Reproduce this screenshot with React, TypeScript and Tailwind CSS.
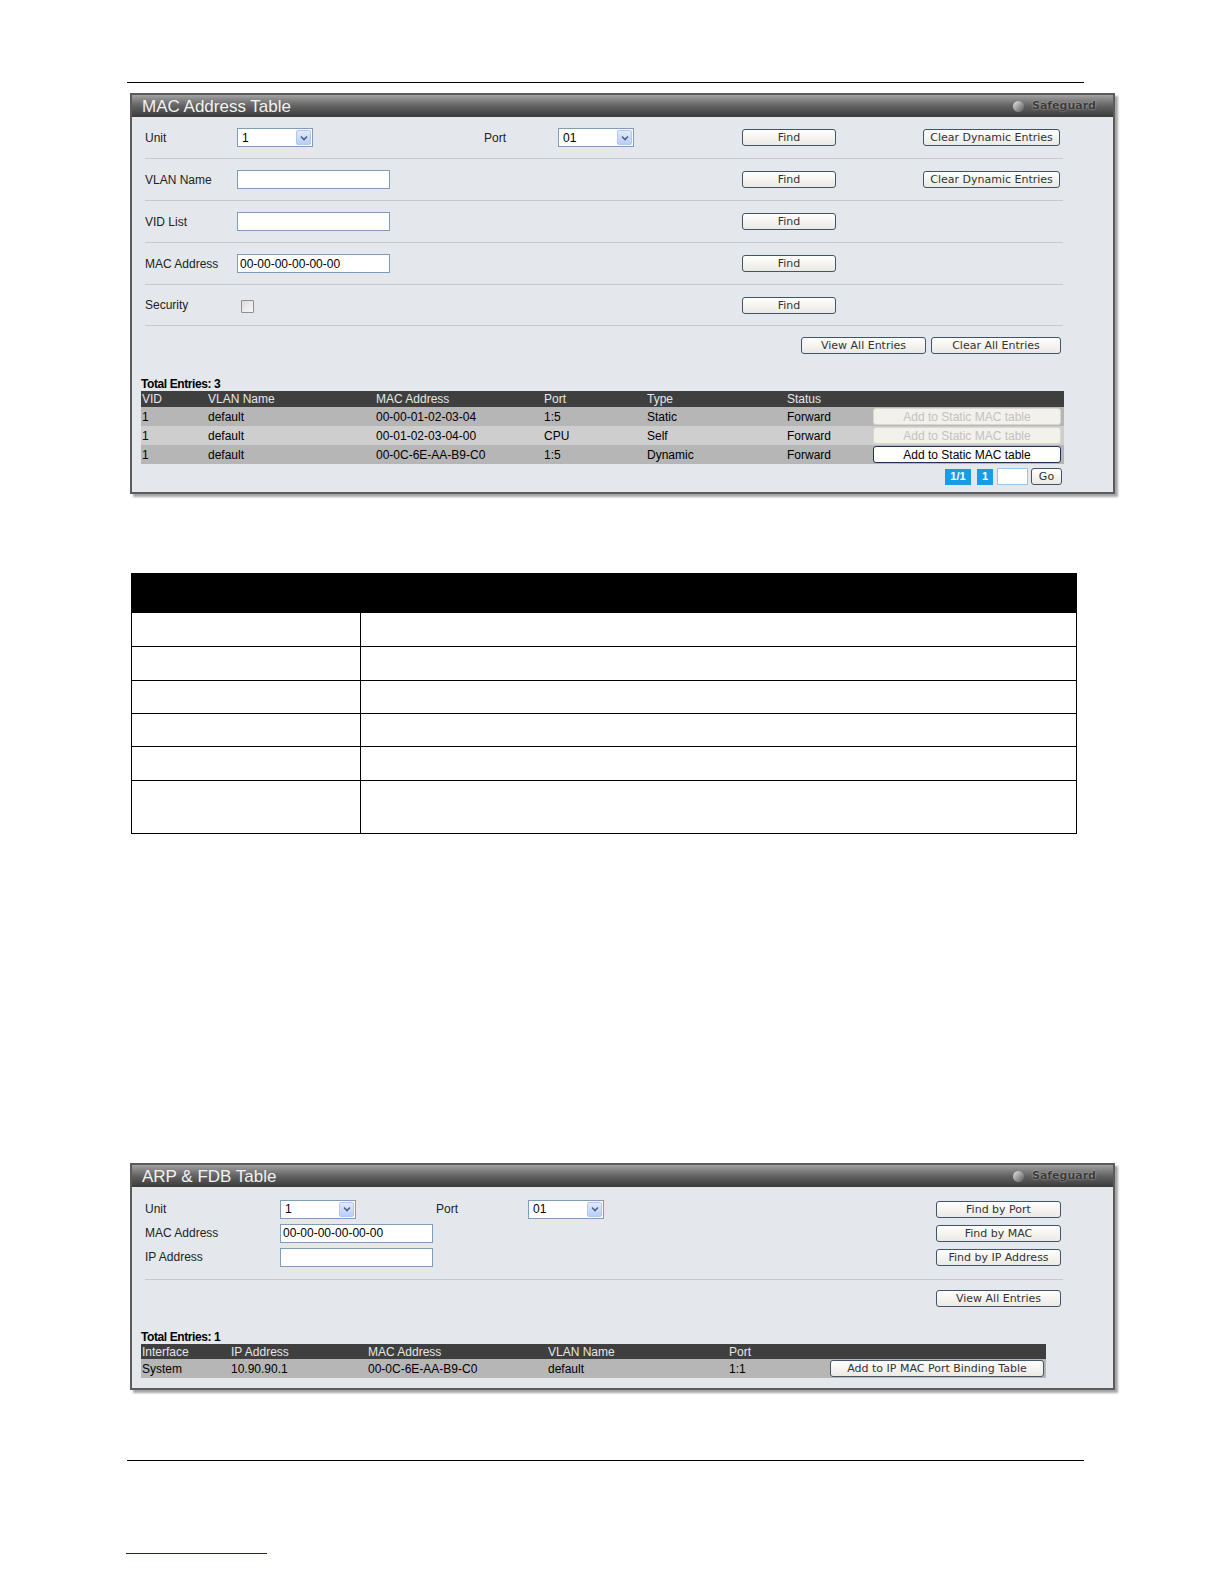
import { ReactNode } from 'react'

const arial = "font-['Liberation_Sans',Arial,sans-serif]"
const verdana = "font-['DejaVu_Sans',Verdana,sans-serif]"

function TitleBar({ title }: { title: string }) {
  return (
    <div className="flex h-[22px] items-center justify-between bg-gradient-to-b from-[#a2a2a2] via-[#626262] to-[#3b3b3b] pl-[10px] pr-[17px]">
      <span className={`${arial} text-[17px] leading-none text-[#f2f2f2]`}>{title}</span>
      <span className="flex items-center gap-[8px]">
        <span className="h-[11px] w-[11px] rounded-full bg-gradient-to-br from-[#e8e8e8] to-[#5a5a5a]" />
        <span className={`${verdana} text-[11px] font-bold text-[#3a3a3a] [text-shadow:0_0_2px_#c8c8c8]`}>Safeguard</span>
      </span>
    </div>
  )
}

function Btn({ children, w, disabled, plain }: { children: ReactNode; w: string; disabled?: boolean; plain?: boolean }) {
  const base = `flex h-[17px] items-center justify-center rounded-[3px] border leading-none ${w}`
  if (disabled)
    return <div className={`${base} ${arial} border-[#d9d7d0] bg-[#f3f1ec] text-[12px] text-[#c2c2c2]`}>{children}</div>
  if (plain)
    return <div className={`${base} ${arial} border-[#1f3553] bg-white text-[12px] text-black`}>{children}</div>
  return (
    <div className={`${base} ${verdana} border-[#425568] bg-gradient-to-b from-white to-[#ebe9e3] text-[11px] text-[#333]`}>
      {children}
    </div>
  )
}

function Select({ value }: { value: string }) {
  return (
    <div className={`${arial} flex h-[19px] w-[76px] items-center border border-[#7f9db9] bg-white text-[12px]`}>
      <span className="flex-1 pl-[4px]">{value}</span>
      <span className="mr-[1px] flex h-[15px] w-[15px] items-center justify-center rounded-[2px] border border-[#b4c6ee] bg-gradient-to-b from-[#e2ebfd] to-[#b9cdf7]">
        <svg width="8" height="6" viewBox="0 0 8 6">
          <path d="M1 1.5 L4 4.5 L7 1.5" fill="none" stroke="#4d6185" strokeWidth="1.6" />
        </svg>
      </span>
    </div>
  )
}

function Input({ value = '', w = 'w-[153px]' }: { value?: string; w?: string }) {
  return (
    <div className={`${arial} flex h-[19px] ${w} items-center border border-[#7f9db9] bg-white pl-[2px] text-[12px] text-black`}>
      {value}
    </div>
  )
}

function Row({ children }: { children: ReactNode }) {
  return <div className="ml-[4px] mr-[1px] flex h-[42px] items-center border-b border-[#c6cace]">{children}</div>
}

function Label({ children, w }: { children: ReactNode; w: string }) {
  return <div className={`${arial} ${w} shrink-0 text-[12px] text-[#222]`}>{children}</div>
}

const macRows = [
  { vid: '1', name: 'default', mac: '00-00-01-02-03-04', port: '1:5', type: 'Static', status: 'Forward', enabled: false, dark: true },
  { vid: '1', name: 'default', mac: '00-01-02-03-04-00', port: 'CPU', type: 'Self', status: 'Forward', enabled: false, dark: false },
  { vid: '1', name: 'default', mac: '00-0C-6E-AA-B9-C0', port: '1:5', type: 'Dynamic', status: 'Forward', enabled: true, dark: true },
]

function MacPanel() {
  return (
    <div className="ml-[130px] w-[985px] border-2 border-[#5b5b5b] bg-[#e4e8ec] shadow-[3px_3px_2px_rgba(0,0,0,0.35)]">
      <TitleBar title="MAC Address Table" />
      <div className="pb-[7px] pl-[9px] pr-[49px]">
        <Row>
          <Label w="w-[92px]">Unit</Label>
          <div className="w-[247px]"><Select value="1" /></div>
          <Label w="w-[74px]">Port</Label>
          <div className="w-[184px]"><Select value="01" /></div>
          <div className="w-[181px]"><Btn w="w-[94px]">Find</Btn></div>
          <Btn w="w-[137px]">Clear Dynamic Entries</Btn>
        </Row>
        <Row>
          <Label w="w-[92px]">VLAN Name</Label>
          <div className="w-[505px]"><Input /></div>
          <div className="w-[181px]"><Btn w="w-[94px]">Find</Btn></div>
          <Btn w="w-[137px]">Clear Dynamic Entries</Btn>
        </Row>
        <Row>
          <Label w="w-[92px]">VID List</Label>
          <div className="w-[505px]"><Input /></div>
          <Btn w="w-[94px]">Find</Btn>
        </Row>
        <Row>
          <Label w="w-[92px]">MAC Address</Label>
          <div className="w-[505px]"><Input value="00-00-00-00-00-00" /></div>
          <Btn w="w-[94px]">Find</Btn>
        </Row>
        <div className="ml-[4px] mr-[1px] flex h-[41px] items-center border-b border-[#c6cace]">
          <Label w="w-[92px]">Security</Label>
          <div className="w-[505px] pl-[4px]">
            <div className="mt-[2px] h-[13px] w-[13px] rounded-[1px] border border-[#8e8f8f] bg-gradient-to-br from-[#dcdcdc] to-[#f8f8f8]" />
          </div>
          <Btn w="w-[94px]">Find</Btn>
        </div>
        <div className="mr-[3px] flex justify-end gap-[5px] pt-[11px]">
          <Btn w="w-[125px]">View All Entries</Btn>
          <Btn w="w-[130px]">Clear All Entries</Btn>
        </div>
        <div className={`${arial} mt-[23px] text-[12px] font-bold leading-[14px] tracking-[-0.4px] text-black`}>Total Entries: 3</div>
        <div className={`${arial} text-[12px]`}>
          <div className="flex h-[16px] items-center bg-[#3f3f3f] pl-[1px] text-[#e6e6e6]">
            <span className="w-[66px]">VID</span>
            <span className="w-[168px]">VLAN Name</span>
            <span className="w-[168px]">MAC Address</span>
            <span className="w-[103px]">Port</span>
            <span className="w-[140px]">Type</span>
            <span className="w-[87px]">Status</span>
          </div>
          {macRows.map((r) => (
            <div key={r.mac} className={`flex h-[19px] items-center pl-[1px] text-black ${r.dark ? 'bg-[#b6b6b6]' : 'bg-[#cecece]'}`}>
              <span className="w-[66px]">{r.vid}</span>
              <span className="w-[168px]">{r.name}</span>
              <span className="w-[168px]">{r.mac}</span>
              <span className="w-[103px]">{r.port}</span>
              <span className="w-[140px]">{r.type}</span>
              <span className="w-[86px]">{r.status}</span>
              <Btn w="w-[188px]" disabled={!r.enabled} plain={r.enabled}>Add to Static MAC table</Btn>
            </div>
          ))}
        </div>
        <div className={`${arial} mr-[2px] mt-[4px] flex items-center justify-end text-[11px]`}>
          <span className="flex h-[16px] w-[26px] items-center justify-center bg-[#1a9be6] font-bold text-white">1/1</span>
          <span className="ml-[6px] flex h-[16px] w-[16px] items-center justify-center bg-[#1a9be6] font-bold text-white">1</span>
          <span className="ml-[4px] h-[17px] w-[31px] border border-[#9fc4e4] bg-white" />
          <div className="ml-[3px]"><Btn w="w-[31px]">Go</Btn></div>
        </div>
      </div>
    </div>
  )
}

const descHeights = ['h-[34px]', 'h-[34px]', 'h-[33px]', 'h-[33px]', 'h-[34px]', 'h-[53px]']

function DescTable() {
  return (
    <div className="ml-[131px] mt-[79px] w-[946px] border border-black">
      <div className="h-[38px] bg-black" />
      {descHeights.map((h, i) => (
        <div key={i} className={`flex ${h} border-t border-black`}>
          <div className="w-[229px] border-r border-black" />
          <div className="flex-1" />
        </div>
      ))}
    </div>
  )
}

function Row24({ children }: { children: ReactNode }) {
  return <div className="ml-[4px] mr-[3px] flex h-[24px] items-center">{children}</div>
}

function ArpPanel() {
  return (
    <div className="ml-[130px] mt-[329px] w-[985px] border-2 border-[#5b5b5b] bg-[#e4e8ec] shadow-[3px_3px_2px_rgba(0,0,0,0.35)]">
      <TitleBar title="ARP & FDB Table" />
      <div className="pb-[10px] pl-[9px] pr-[49px] pt-[10px]">
        <Row24>
          <Label w="w-[135px]">Unit</Label>
          <div className="w-[156px]"><Select value="1" /></div>
          <Label w="w-[92px]">Port</Label>
          <Select value="01" />
          <div className="ml-auto"><Btn w="w-[125px]">Find by Port</Btn></div>
        </Row24>
        <Row24>
          <Label w="w-[135px]">MAC Address</Label>
          <Input value="00-00-00-00-00-00" />
          <div className="ml-auto"><Btn w="w-[125px]">Find by MAC</Btn></div>
        </Row24>
        <Row24>
          <Label w="w-[135px]">IP Address</Label>
          <Input />
          <div className="ml-auto"><Btn w="w-[125px]">Find by IP Address</Btn></div>
        </Row24>
        <div className="ml-[4px] mr-[1px] mt-[10px] border-b border-[#c6cace]" />
        <div className="mr-[3px] flex justify-end pt-[10px]">
          <Btn w="w-[125px]">View All Entries</Btn>
        </div>
        <div className={`${arial} mt-[23px] text-[12px] font-bold leading-[14px] tracking-[-0.4px] text-black`}>Total Entries: 1</div>
        <div className={`${arial} w-[905px] text-[12px]`}>
          <div className="flex h-[15px] items-center bg-[#3f3f3f] pl-[1px] text-[#e6e6e6]">
            <span className="w-[89px]">Interface</span>
            <span className="w-[137px]">IP Address</span>
            <span className="w-[180px]">MAC Address</span>
            <span className="w-[181px]">VLAN Name</span>
            <span className="w-[101px]">Port</span>
          </div>
          <div className="flex h-[19px] items-center bg-[#b6b6b6] pl-[1px] text-black">
            <span className="w-[89px]">System</span>
            <span className="w-[137px]">10.90.90.1</span>
            <span className="w-[180px]">00-0C-6E-AA-B9-C0</span>
            <span className="w-[181px]">default</span>
            <span className="w-[101px]">1:1</span>
            <Btn w="w-[214px]">Add to IP MAC Port Binding Table</Btn>
          </div>
        </div>
      </div>
    </div>
  )
}

export default function App() {
  return (
    <div className="h-[1560px] overflow-hidden bg-white pt-[82px]">
      <div className="ml-[127px] w-[957px] border-t border-black" />
      <div className="mt-[10px]">
        <MacPanel />
      </div>
      <DescTable />
      <ArpPanel />
      <div className="ml-[127px] mt-[70px] w-[957px] border-t border-black" />
      <div className="ml-[126px] mt-[92px] w-[141px] border-t border-[#1b1b6b]" />
    </div>
  )
}
